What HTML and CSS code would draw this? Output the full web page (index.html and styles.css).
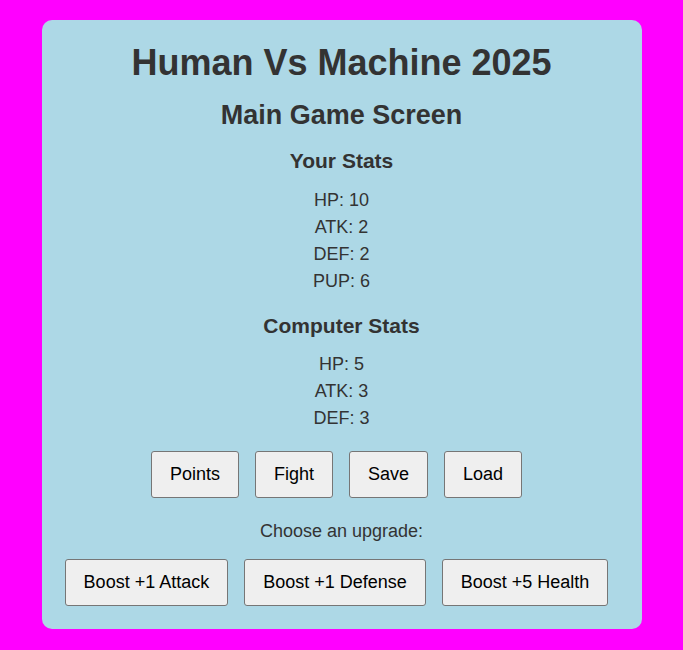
FILE: index.html
```html
<!DOCTYPE html>
<html lang="en">
<head>
    <meta charset="UTF-8">
    <meta name="viewport" content="width=device-width, initial-scale=1.0">
    <title>Human Vs Machine 2025</title>
    <link rel="stylesheet" href="styles.css">
</head>
<body>
<div class="game">
    <h1>Human Vs Machine 2025</h1>
    <h2>Main Game Screen</h2>

    <div class="stats player-stats">
        <h3>Your Stats</h3>
        <p>HP: 10</p>
        <p>ATK: 2</p>
        <p>DEF: 2</p>
        <p>PUP: 6</p>
    </div>

    <div class="stats computer-stats">
        <h3>Computer Stats</h3>
        <p>HP: 5</p>
        <p>ATK: 3</p>
        <p>DEF: 3</p>
    </div>

    <div class="actions">
        <button>Points</button>
        <button>Fight</button>
        <button>Save</button>
        <button>Load</button>
    </div>

    <p class="upgrade-label">Choose an upgrade:</p>

    <div class="actions upgrades">
        <button>Boost +1 Attack</button>
        <button>Boost +1 Defense</button>
        <button>Boost +5 Health</button>
    </div>
</div>
</body>
</html>
```

FILE: styles.css
```css
body {
    font-family: "Liberation Sans", Arial, sans-serif;
    font-size: 18px;
    line-height: 1.5;
    color: #333;
    background-color: #ff00ff;
    margin: 0;
    padding: 20px 0;
}

.game {
    width: 600px;
    margin: 0 auto;
    box-sizing: border-box;
    padding: 16px 20px 23px;
    background-color: lightblue;
    border-radius: 10px;
    text-align: center;
}

h1 {
    font-size: 36px;
    margin: 0 0 5px;
}

h2 {
    font-size: 27px;
    margin: 0 0 9.5px;
}

h3 {
    font-size: 21px;
    margin: 0 0 10px;
}

.stats p {
    margin: 0;
}

.player-stats {
    margin-bottom: 15px;
}

.computer-stats {
    margin-bottom: 19px;
}

.actions {
    display: flex;
    justify-content: center;
    gap: 16px;
    padding-right: 10px;
}

.actions button {
    font-family: inherit;
    font-size: 18px;
    line-height: 21px;
    color: #000;
    padding: 12px 18px;
    background-color: #efefef;
    border: 1px solid #767676;
    border-radius: 3px;
    cursor: pointer;
}

.actions button:hover {
    background-color: #e5e5e5;
}

.upgrade-label {
    margin: 19.5px 0 14.5px;
}
```
